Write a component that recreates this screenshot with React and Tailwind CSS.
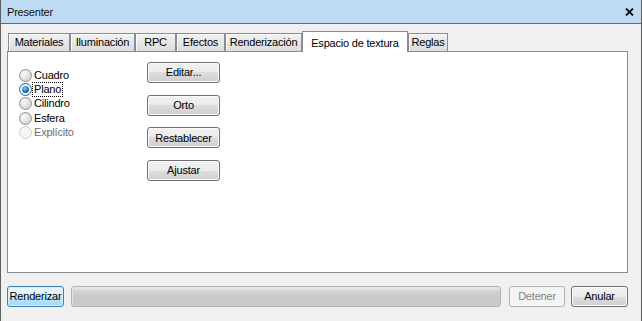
import React from "react";

const tabs = [
  { label: "Materiales", w: "w-[62px]" },
  { label: "Iluminación", w: "w-[65px]" },
  { label: "RPC", w: "w-[41px]" },
  { label: "Efectos", w: "w-[49px]" },
  { label: "Renderización", w: "w-[77px]" },
  { label: "Espacio de textura", w: "w-[106px]", active: true },
  { label: "Reglas", w: "w-[40px]" },
];

const options = [
  { label: "Cuadro" },
  { label: "Plano", checked: true },
  { label: "Cilindro" },
  { label: "Esfera" },
  { label: "Explícito", disabled: true },
];

const Radio = ({ checked, disabled }) => (
  <span
    className={
      disabled
        ? "w-[13px] h-[13px] rounded-full border border-[#c9cacb] bg-[#f4f4f4] shrink-0"
        : checked
          ? "w-[13px] h-[13px] rounded-full border border-[#2c628b] bg-[radial-gradient(circle,#ffffff_40%,#cfe6f7_100%)] shrink-0 flex items-center justify-center"
          : "w-[13px] h-[13px] rounded-full border border-[#8e8f8f] bg-[radial-gradient(circle_at_35%_35%,#f4f4f4_10%,#d4d4d4_80%)] shrink-0 flex items-center justify-center"
    }
  >
    {checked && (
      <span className="w-[7px] h-[7px] rounded-full bg-[radial-gradient(circle_at_40%_35%,#8ad0ff_0%,#1d6cb3_55%,#0b3f72_100%)]" />
    )}
  </span>
);

const Button = ({ children, className = "" }) => (
  <div
    className={`h-[21px] rounded-[3px] border border-[#707070] bg-[linear-gradient(to_bottom,#f2f2f2_0%,#ebebeb_50%,#dddddd_50%,#cfcfcf_100%)] shadow-[inset_0_0_0_1px_#fbfbfb] flex items-center justify-center ${className}`}
  >
    {children}
  </div>
);

export default function App() {
  return (
    <div className="w-[642px] h-[321px] bg-[#f0f0f0] border-x border-[#5f5f5f] flex flex-col font-['Liberation_Sans',Arial,sans-serif] text-[11px] tracking-[-0.2px] text-black overflow-hidden">
      {/* title bar */}
      <div className="h-[24px] shrink-0 bg-[#bfdbf3] border-b border-[#6a6a6a] flex items-center justify-between pl-[6px] pr-[7px]">
        <span className="text-[#111] mt-[1px]">Presenter</span>
        <svg width="9" height="8" viewBox="0 0 9 8" className="mt-[1px]">
          <path d="M1 0.5 L8 7.5 M8 0.5 L1 7.5" stroke="#111" strokeWidth="1.8" />
        </svg>
      </div>

      <div className="flex-1 flex flex-col pl-[6px] pr-[13px]">
        {/* tabs */}
        <div className="mt-[7px] h-[20px] flex items-end pl-[1px]">
          {tabs.map((t) =>
            t.active ? (
              <div
                key={t.label}
                className={`${t.w} h-[21px] -mb-px relative z-10 bg-white border-x border-t border-[#898c95] flex justify-center pt-[3px]`}
              >
                {t.label}
              </div>
            ) : (
              <div
                key={t.label}
                className={`${t.w} h-[18px] border-x border-t border-[#898c95] bg-[linear-gradient(to_bottom,#f2f2f2,#dcdcdc)] shadow-[inset_1px_1px_0_#fafafa] flex items-center justify-center`}
              >
                {t.label}
              </div>
            )
          )}
        </div>

        {/* panel */}
        <div className="h-[222px] border border-[#898c95] bg-white flex pl-[11px]">
          <div className="w-[128px] pt-[16px] flex flex-col">
            {options.map((o) => (
              <div key={o.label} className="h-[14.33px] flex items-center">
                <Radio checked={o.checked} disabled={o.disabled} />
                <span
                  className={`px-[1px] leading-[13px] border border-dotted ${
                    o.checked ? "border-black" : "border-transparent"
                  } ${o.disabled ? "text-[#6d6d6d]" : ""}`}
                >
                  {o.label}
                </span>
              </div>
            ))}
          </div>
          <div className="pt-[10px] flex flex-col gap-[11.7px]">
            <Button className="w-[73px]">Editar...</Button>
            <Button className="w-[73px]">Orto</Button>
            <Button className="w-[73px]">Restablecer</Button>
            <Button className="w-[73px]">Ajustar</Button>
          </div>
        </div>

        {/* bottom bar */}
        <div className="mt-[13px] flex items-start">
          <div className="w-[57px] h-[21px] rounded-[3px] border border-[#3c7fb1] bg-[linear-gradient(to_bottom,#eaf6fd_0%,#d9f0fc_50%,#bee6fd_50%,#a7d9f5_100%)] shadow-[inset_0_0_0_1px_#d6f0fc] flex items-center justify-center">
            Renderizar
          </div>
          <div className="ml-[7px] flex-1 h-[21px] rounded-[3px] border border-[#b2b2b2] bg-[linear-gradient(to_bottom,#f2f2f2_0%,#d3d3d3_20%,#c8c8c8_60%,#cdcdcd_100%)] shadow-[inset_1px_1px_0_#e4e4e4]" />
          <div className="ml-[8px] w-[56px] h-[21px] rounded-[3px] border border-[#adb2b5] bg-[#f4f4f4] text-[#838383] flex items-center justify-center">
            Detener
          </div>
          <Button className="ml-[6px] w-[57px]">Anular</Button>
        </div>
      </div>
    </div>
  );
}
